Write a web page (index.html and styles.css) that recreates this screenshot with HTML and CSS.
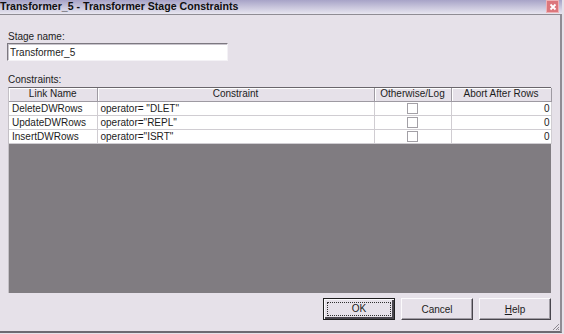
FILE: index.html
```html
<!DOCTYPE html>
<html lang="en">
<head>
    <meta charset="UTF-8">
    <title>Transformer_5 - Transformer Stage Constraints</title>
    <link rel="stylesheet" href="styles.css">
</head>
<body>
    <div class="janela">
        <div class="titulo">
            <span>Transformer_5 - Transformer Stage Constraints</span>
            <span class="fechar">
                <svg width="10" height="10" viewBox="0 0 10 10"><path d="M2.5 2.5 L7.5 7.5 M7.5 2.5 L2.5 7.5" stroke="#fff" stroke-width="1.8"/></svg>
            </span>
        </div>
        <div class="corpo">
            <div class="rotulo">Stage name:</div>
            <input class="campo" type="text" value="Transformer_5">
            <div class="rotulo rotulo-tabela">Constraints:</div>
            <div class="grade">
                <table>
                    <colgroup>
                        <col class="c1"><col class="c2"><col class="c3"><col class="c4">
                    </colgroup>
                    <thead>
                        <tr>
                            <th>Link Name</th>
                            <th>Constraint</th>
                            <th>Otherwise/Log</th>
                            <th>Abort After Rows</th>
                        </tr>
                    </thead>
                    <tbody>
                        <tr>
                            <td>DeleteDWRows</td>
                            <td>operator= "DLET"</td>
                            <td class="meio"><span class="caixa"></span></td>
                            <td class="num">0</td>
                        </tr>
                        <tr>
                            <td>UpdateDWRows</td>
                            <td>operator="REPL"</td>
                            <td class="meio"><span class="caixa"></span></td>
                            <td class="num">0</td>
                        </tr>
                        <tr>
                            <td>InsertDWRows</td>
                            <td>operator="ISRT"</td>
                            <td class="meio"><span class="caixa"></span></td>
                            <td class="num">0</td>
                        </tr>
                    </tbody>
                </table>
            </div>
            <div class="botoes">
                <button class="botao padrao"><span class="foco">OK</span></button>
                <button class="botao">Cancel</button>
                <button class="botao"><u>H</u>elp</button>
            </div>
            <svg class="alca" width="8" height="8" viewBox="0 0 8 8">
                <path d="M7 1 L1 7 M7 4 L4 7 M7 6 L6 7" stroke="#8c8890" stroke-width="1"/>
            </svg>
        </div>
    </div>
</body>
</html>
```

FILE: styles.css
```css
* {
    margin: 0;
    padding: 0;
    box-sizing: border-box;
}

body {
    width: 564px;
    height: 334px;
    background-color: #e6e1e9;
    font-family: "Liberation Sans", Arial, sans-serif;
    font-size: 10px;
    color: #1c1c1c;
    overflow: hidden;
}

.janela {
    width: 562px;
    height: 333px;
}

.titulo {
    height: 14px;
    background-image: linear-gradient(#a7a3c7, #e8e6f0);
    font-weight: bold;
    font-size: 10.6px;
    line-height: 13px;
    color: #101010;
    display: flex;
    justify-content: space-between;
    padding-right: 3px;
}

.fechar {
    width: 13px;
    height: 13px;
    background-color: #dc767c;
    border: 1px solid #eeb2b6;
    display: flex;
    align-items: center;
    justify-content: center;
}

.corpo {
    position: relative;
    height: 319px;
    border-top: 1px solid #8f8c94;
    border-right: 2px solid #8f8c94;
    border-bottom: 2px solid #6d6a72;
    padding: 15px 9px 0 8px;
}

.rotulo {
    height: 13px;
    line-height: 13px;
}

.rotulo-tabela {
    margin-top: 12px;
}

.campo {
    display: block;
    width: 221px;
    height: 18px;
    margin-left: -1px;
    padding: 0 2px;
    font-family: inherit;
    font-size: 10px;
    color: #1c1c1c;
    background: #fff;
    border: 1px solid;
    border-color: #7c7880 #f4f2f6 #f4f2f6 #7c7880;
    box-shadow: inset 1px 1px 0 #c8c4cc;
    outline: none;
}

.grade {
    width: 543px;
    height: 206px;
    margin-top: 1px;
    background-color: #807c81;
    border-top: 1px solid #6a666c;
    border-left: 1px solid #c4c0c6;
}

table {
    width: 542px;
    border-collapse: collapse;
    table-layout: fixed;
    background: #fff;
}

.c1 { width: 88px; }
.c2 { width: 277px; }
.c3 { width: 77px; }
.c4 { width: 100px; }

th {
    height: 13px;
    font-weight: normal;
    background-color: #e6e1e9;
    border-right: 1px solid #9e9aa2;
    border-bottom: 1px solid #9e9aa2;
    box-shadow: inset 1px 1px 0 #fff;
    text-align: center;
    line-height: 12px;
}

td {
    height: 14px;
    padding: 0 3px;
    line-height: 13px;
    border-right: 1px solid #d0cdd2;
    border-bottom: 1px solid #d0cdd2;
    white-space: nowrap;
}

td.meio {
    text-align: center;
}

td.num {
    text-align: right;
    padding-right: 1px;
}

.caixa {
    display: inline-block;
    width: 11px;
    height: 11px;
    border: 1px solid #a3a0a6;
    vertical-align: middle;
}

.botoes {
    display: flex;
    justify-content: flex-end;
    gap: 6px;
    margin-top: 5px;
}

.botao {
    width: 72px;
    height: 22px;
    font-family: inherit;
    font-size: 10px;
    color: #1c1c1c;
    background-color: #e6e1e9;
    border: 1px solid;
    border-color: #fbfafc #48454c #48454c #fbfafc;
    box-shadow: inset -1px -1px 0 #a09ca4;
}

.padrao {
    border: 1px solid #1e1e1e;
    box-shadow: inset 1px 1px 0 #fbfafc, inset -2px -2px 0 #48454c;
    padding: 3px;
}

.foco {
    display: block;
    height: 100%;
    line-height: 12px;
    border: 1px dotted #303030;
}

.alca {
    position: absolute;
    right: 0;
    bottom: 0;
}
```
